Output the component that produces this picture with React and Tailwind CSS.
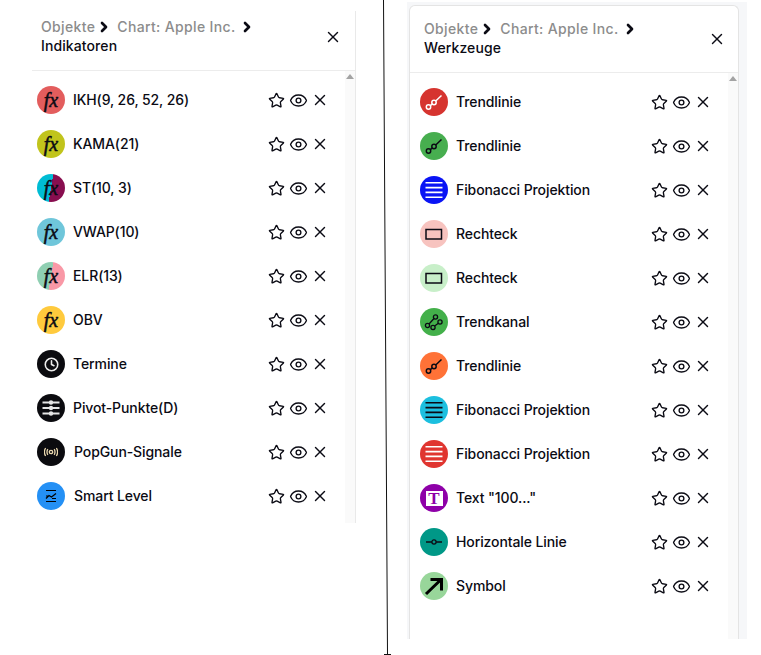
import { ChevronRight, Clock, Eye, Star, X } from 'lucide-react';

const FONT = "font-['Inter','Liberation_Sans',sans-serif]";

function Fx() {
  return (
    <span className="font-['Liberation_Serif',serif] text-[20px] italic leading-none text-[#0b0b14] [-webkit-text-stroke:0.5px_#0b0b14]">
      fx
    </span>
  );
}

function Trend({ color = '#0b0b14' }) {
  return (
    <svg width="20" height="20" viewBox="0 0 20 20" fill="none" stroke={color} strokeWidth="1.5">
      <circle cx="4.5" cy="15" r="2.2" />
      <circle cx="10" cy="10.5" r="2.2" />
      <path d="M6.3 13.6 8.2 12M11.7 9 17.5 3.5" />
    </svg>
  );
}

function Channel() {
  return (
    <svg width="20" height="20" viewBox="0 0 20 20" fill="none" stroke="#0b0b14" strokeWidth="1.3">
      <circle cx="3.5" cy="13.5" r="2.1" />
      <circle cx="11.5" cy="5" r="2.1" />
      <circle cx="9" cy="15.5" r="2.1" />
      <circle cx="16" cy="10" r="2.1" />
      <path d="M5 12 10 6.5M10.6 14 14.4 11.3M10 17l-.5 1" />
    </svg>
  );
}

function Fib({ color }) {
  return (
    <svg width="20" height="20" viewBox="0 0 20 20" stroke={color} strokeWidth="1.6">
      <path d="M1.5 2.7h17M1.5 7.6h17M1.5 12.4h17M1.5 17.3h17" />
    </svg>
  );
}

function Rect({ fill }) {
  return (
    <svg width="18" height="14" viewBox="0 0 18 14" fill={fill} stroke="#0b0b14" strokeWidth="1.5">
      <rect x="1" y="2.5" width="15.5" height="9.5" />
    </svg>
  );
}

function HLine() {
  return (
    <svg width="18" height="10" viewBox="0 0 18 10" fill="none" stroke="#0b0b14" strokeWidth="1.3">
      <circle cx="9" cy="5" r="2.1" />
      <path d="M1 5h5.9M11.1 5H17" />
    </svg>
  );
}

function TextTool() {
  return (
    <div className="flex h-[15px] w-[17px] items-center justify-center bg-white font-['Liberation_Serif',serif] text-[17px] font-bold leading-none text-[#8e00a8]">
      T
    </div>
  );
}

function Arrow() {
  return (
    <svg width="20" height="20" viewBox="0 0 20 20" fill="none" stroke="#000" strokeWidth="3">
      <path d="M2 18 16 4.5M6.5 3.5h11v11" />
    </svg>
  );
}

function Sliders() {
  return (
    <svg width="20" height="20" viewBox="0 0 20 20" fill="#e6e6e6" stroke="#e6e6e6" strokeWidth="2">
      <path d="M1.5 4.5h17M1.5 10h17M1.5 15.5h17" />
      <circle cx="10" cy="4.5" r="2.2" stroke="none" />
      <circle cx="10" cy="10" r="2.2" stroke="none" />
      <circle cx="10" cy="15.5" r="2.2" stroke="none" />
    </svg>
  );
}

function Signal() {
  return (
    <svg width="14" height="10" viewBox="0 0 14 10" fill="none" stroke="#ecd9b0" strokeWidth="1.3">
      <circle cx="7" cy="5" r="1.7" />
      <path d="M3.8 2.2c-1 1.7-1 3.9 0 5.6M10.2 2.2c1 1.7 1 3.9 0 5.6M1.6 1c-1.5 2.5-1.5 5.5 0 8M12.4 1c1.5 2.5 1.5 5.5 0 8" />
    </svg>
  );
}

function SmartLevel() {
  return (
    <svg width="12" height="14" viewBox="0 0 12 14" fill="none" stroke="#000" strokeWidth="1.2">
      <path d="M1 1.5h10M1 12.5h10M1 9.5l3-3 2.5 1.5L11 4.5M1 7h2M7 9.5h4" />
    </svg>
  );
}

const indicators = [
  { name: 'IKH(9, 26, 52, 26)', bg: 'bg-[#e35d5d]', icon: <Fx /> },
  { name: 'KAMA(21)', bg: 'bg-[#c1c41c]', icon: <Fx /> },
  { name: 'ST(10, 3)', bg: 'bg-[linear-gradient(100deg,#00bcd4_50%,#880e4f_50%)]', icon: <Fx /> },
  { name: 'VWAP(10)', bg: 'bg-[#6fc6da]', icon: <Fx /> },
  { name: 'ELR(13)', bg: 'bg-[linear-gradient(100deg,#8fcfb2_50%,#f998a6_50%)]', icon: <Fx /> },
  { name: 'OBV', bg: 'bg-[#ffca3d]', icon: <Fx /> },
  { name: 'Termine', bg: 'bg-[#0b0b0f]', icon: <Clock size={15} color="#ececec" strokeWidth={2.5} /> },
  { name: 'Pivot-Punkte(D)', bg: 'bg-[#0b0b0f]', icon: <Sliders /> },
  { name: 'PopGun-Signale', bg: 'bg-[#0b0b0f]', icon: <Signal />, gap: 'ml-[9px]' },
  { name: 'Smart Level', bg: 'bg-[#2490f5]', icon: <SmartLevel />, gap: 'ml-[9px]' },
];

const tools = [
  { name: 'Trendlinie', bg: 'bg-[#d6342f]', icon: <Trend color="#ffffff" /> },
  { name: 'Trendlinie', bg: 'bg-[#47ae4f]', icon: <Trend /> },
  { name: 'Fibonacci Projektion', bg: 'bg-[#0a14f5]', icon: <Fib color="#ffffff" /> },
  { name: 'Rechteck', bg: 'bg-[#f7c3bf]', icon: <Rect fill="#f7c3bf" /> },
  { name: 'Rechteck', bg: 'bg-[#c8efc9]', icon: <Rect fill="#c8efc9" /> },
  { name: 'Trendkanal', bg: 'bg-[#43b04a]', icon: <Channel /> },
  { name: 'Trendlinie', bg: 'bg-[#ff7237]', icon: <Trend /> },
  { name: 'Fibonacci Projektion', bg: 'bg-[#1cbfdf]', icon: <Fib color="#0b0b14" /> },
  { name: 'Fibonacci Projektion', bg: 'bg-[#e03530]', icon: <Fib color="#ffffff" /> },
  { name: 'Text "100..."', bg: 'bg-[#8e00a8]', icon: <TextTool /> },
  { name: 'Horizontale Linie', bg: 'bg-[#009887]', icon: <HLine /> },
  { name: 'Symbol', bg: 'bg-[#98d69a]', icon: <Arrow /> },
];

function Row({ item }) {
  return (
    <div className="flex h-[44px] items-center">
      <div className={`flex h-[28px] w-[28px] shrink-0 items-center justify-center overflow-hidden rounded-full ${item.bg}`}>
        {item.icon}
      </div>
      <span className={`${item.gap || 'ml-[8px]'} mb-[2px] text-[14px] font-medium tracking-[-0.1px] text-[#0b0b14]`}>
        {item.name}
      </span>
      <div className="ml-auto flex items-center text-[#0b0b14]">
        <div className="flex w-[22px] justify-center">
          <Star size={17} strokeWidth={1.9} />
        </div>
        <div className="flex w-[22px] justify-center">
          <Eye size={19} strokeWidth={1.7} />
        </div>
        <div className="flex w-[22px] justify-center">
          <X size={18} strokeWidth={1.9} />
        </div>
      </div>
    </div>
  );
}

function Header({ title, className, closeClass }) {
  return (
    <div className={`relative border-b border-[#ececec] ${className}`}>
      <div className="flex items-center text-[14px] font-medium leading-[19px] tracking-[0.35px] text-[#8c8c8c]">
        <span>Objekte</span>
        <ChevronRight size={16} strokeWidth={4} color="#0b0b14" className="-my-1 ml-[1px] mr-[5px]" />
        <span>Chart: Apple Inc.</span>
        <ChevronRight size={16} strokeWidth={4} color="#0b0b14" className="-my-1 ml-[3px]" />
      </div>
      <div className="text-[14px] font-medium leading-[19px] tracking-[0.1px] text-[#0b0b14]">{title}</div>
      <X size={18} strokeWidth={1.9} color="#0b0b14" className={`absolute ${closeClass}`} />
    </div>
  );
}

function ScrollStrip() {
  return (
    <div className="flex w-[10px] shrink-0 justify-center bg-[#fafafa] pt-[3px]">
      <div className="h-0 w-0 border-x-[4px] border-b-[5px] border-x-transparent border-b-[#a3a3a3]" />
    </div>
  );
}

export default function App() {
  return (
    <div className={`relative flex h-[655px] w-[761px] items-start overflow-hidden bg-white ${FONT}`}>
      <div className="ml-[32px] mt-[11px] w-[324px] border-r border-[#e9e9e9]">
        <Header
          title="Indikatoren"
          className="h-[60px] pl-[9px] pt-[6px]"
          closeClass="right-[13px] top-[17px]"
        />
        <div className="flex">
          <div className="flex-1 pb-[5px] pl-[5px] pr-[14px] pt-[7px]">
            {indicators.map((item) => (
              <Row key={item.name} item={item} />
            ))}
          </div>
          <ScrollStrip />
        </div>
      </div>

      <div className="ml-[51px] mt-[2px] h-[637px] w-[340px] bg-[#f6f7f9] pl-[2px] pr-[8px] pt-[3px]">
        <div className="flex h-full flex-col rounded-t-md border-x border-t border-[#e4e4e4] bg-white">
          <Header
            title="Werkzeuge"
            className="h-[67px] pl-[14px] pt-[13px]"
            closeClass="right-[12px] top-[24px]"
          />
          <div className="flex flex-1">
            <div className="flex-1 pl-[10px] pr-[14px] pt-[7px]">
              {tools.map((item, i) => (
                <Row key={i} item={item} />
              ))}
            </div>
            <ScrollStrip />
          </div>
        </div>
      </div>

      {/* stray divider line drawn over the page */}
      <svg className="absolute left-[380px] top-0" width="12" height="655" viewBox="0 0 12 655" fill="none" stroke="#111" strokeWidth="1">
        <path d="M3.5 0 7.5 654M4 654.5h7" />
      </svg>
    </div>
  );
}
